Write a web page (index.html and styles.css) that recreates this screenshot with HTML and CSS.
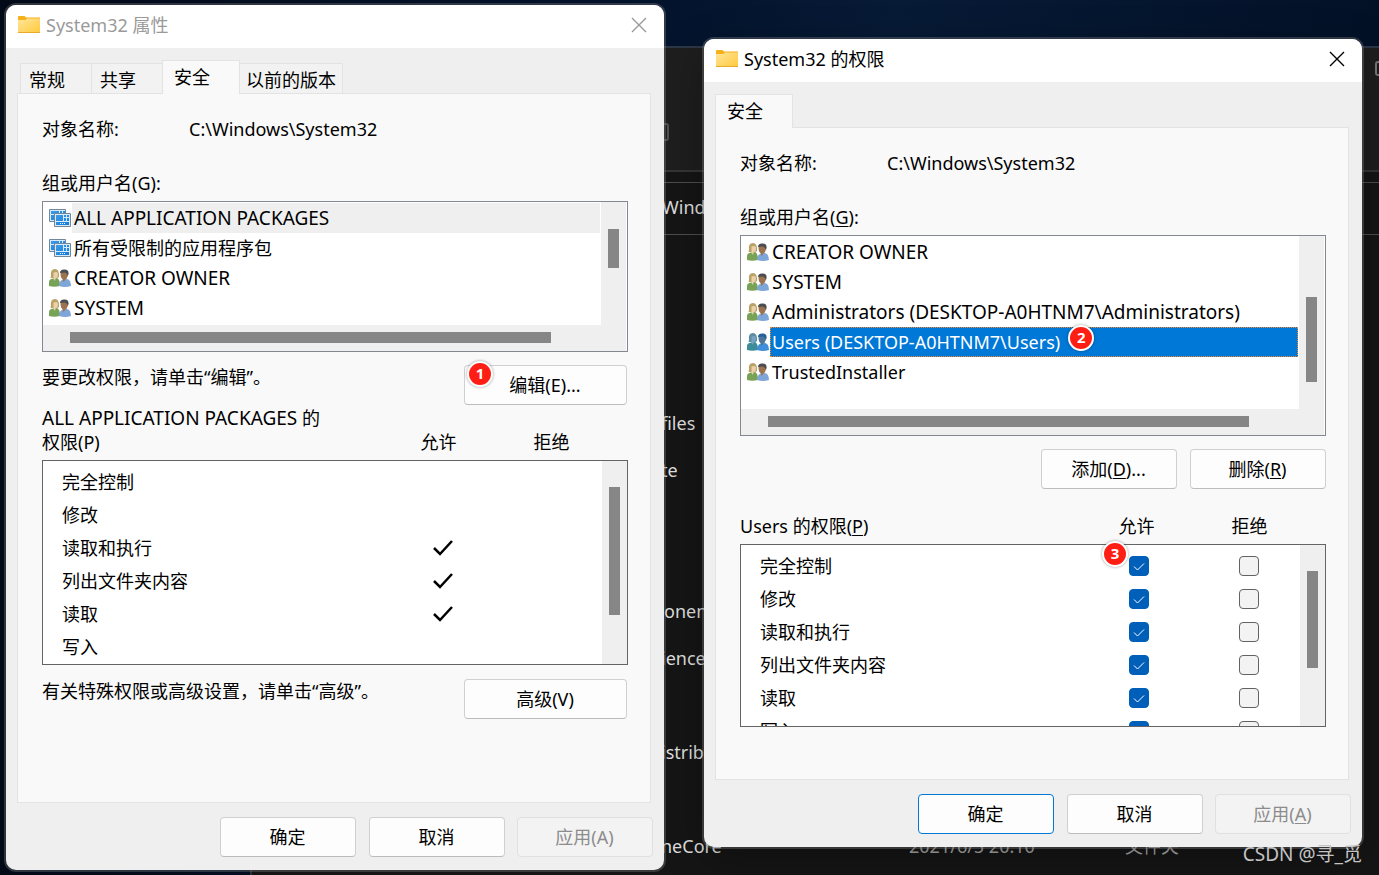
FILE: index.html
```html
<!DOCTYPE html>
<html lang="zh-CN">
<head>
<meta charset="utf-8">
<title>System32 的权限</title>
<link rel="stylesheet" href="styles.css">
</head>
<body>
<svg class="defs" aria-hidden="true">
  <defs>
    <linearGradient id="folder-fill" x1="0" y1="0" x2="1" y2="1">
      <stop offset="0" stop-color="#ffe69a"/><stop offset="1" stop-color="#ffc93c"/>
    </linearGradient>
    <linearGradient id="app-fill" x1="0" y1="0" x2="1" y2="1">
      <stop offset="0" stop-color="#3f9ce6"/><stop offset="1" stop-color="#0f7cdc"/>
    </linearGradient>
  </defs>
  <symbol id="folder" viewBox="0 0 22 18">
    <path d="M0 1Q0 0 1 0H6.500L8 1.500H22V8H0Z" fill="#f5b01c"/>
    <path d="M0 4H7.500L9 2.500H22V17H0Z" fill="url(#folder-fill)"/>
    <path d="M0 16.500H22" stroke="#e9a92b"/>
  </symbol>
  <symbol id="close" viewBox="0 0 16 16">
    <path d="M1 1L15 15M15 1L1 15" fill="none" stroke="currentColor" stroke-width="1.400"/>
  </symbol>
  <symbol id="apps" viewBox="0 0 22 18">
    <path d="M.5.5H16.500V12.500H.5Z" fill="#d8eafa" stroke="#71879b"/>
    <path d="M2 2H10V5H2ZM11 2H13V4H11ZM14 2H16V4H14ZM2 6H6V11H2Z" fill="url(#app-fill)"/>
    <path d="M5.500 4.500H21.500V17.500H5.500Z" fill="#d8eafa" stroke="#71879b"/>
    <path d="M7 6H14V12H7ZM15 6H17V8H15ZM18 6H20V8H18ZM15 9H17V12H15ZM18 9H20V12H18ZM7 13H20V16H7Z" fill="url(#app-fill)"/>
    <path d="M11 14.500H12M13 14.500H14M15 14.500H16" stroke="#fff"/>
  </symbol>
  <symbol id="users" viewBox="0 0 22 18">
    <path class="u-shirt1" d="M0 17V13Q0 10 4 9.500L8 9Q11 10 11 17Q5 18.500 0 17Z"/>
    <path class="u-hair1" d="M2 7Q1 0 6 0Q10.500 0 10 8L8.500 9H2Q1 9 2 7Z"/>
    <path class="u-skin1" d="M4.500 3.500Q9 2 9 5Q9 9 6.500 9.500L6 12L4.500 10Z"/>
    <path class="u-shirt2" d="M10 17Q10 11.500 14 10.500L18 10Q22 11 22 17Q16 19 10 17Z"/>
    <path class="u-skin2" d="M11.500 4Q12 1 16 1Q20 2 19 6Q18 10 16.500 10.500L14.500 13L13.500 10Q11.500 9 11.500 4Z"/>
    <path class="u-hair2" d="M11 4Q11 0 16 .5Q21 1 19 7L18 5L16 3.500Z"/>
  </symbol>
</svg>

<div class="explorer" aria-hidden="true">
  <div class="explorer-bar"><span class="stub"></span><span class="stub stub-top"></span></div>
  <div class="explorer-gap"></div>
  <div class="explorer-address">Windows</div>
  <div class="explorer-list">
    <div class="file">files</div>
    <div class="file">te</div>
    <div class="file"></div>
    <div class="file"></div>
    <div class="file file-inset">onents</div>
    <div class="file">ience</div>
    <div class="file"></div>
    <div class="file">istribu</div>
    <div class="file"></div>
    <div class="file"><span>neCore</span><span class="date">2021/6/5 20:10</span><span class="kind">文件夹</span></div>
  </div>
</div>

<main class="desktop">
  <section class="window window-back" aria-label="System32 属性">
    <header class="titlebar">
      <svg class="folder"><use href="#folder"/></svg>
      <h1 class="title">System32 属性</h1>
      <button class="close" aria-label="关闭"><svg><use href="#close"/></svg></button>
    </header>
    <div class="tabs" role="tablist">
      <button class="tab" role="tab">常规</button>
      <button class="tab" role="tab">共享</button>
      <button class="tab tab-active" role="tab" aria-selected="true">安全</button>
      <button class="tab" role="tab">以前的版本</button>
    </div>
    <div class="panel">
      <div class="object"><span class="object-label">对象名称:</span><span>C:\Windows\System32</span></div>
      <div class="caption" id="groups1">组或用户名(G):</div>
      <div class="list list-short">
        <ul class="rows" role="listbox" aria-labelledby="groups1">
          <li class="row row-hot" role="option"><svg><use href="#apps"/></svg><span class="name caps">ALL APPLICATION PACKAGES</span></li>
          <li class="row" role="option"><svg><use href="#apps"/></svg><span class="name">所有受限制的应用程序包</span></li>
          <li class="row" role="option"><svg><use href="#users"/></svg><span class="name caps">CREATOR OWNER</span></li>
          <li class="row" role="option"><svg><use href="#users"/></svg><span class="name caps">SYSTEM</span></li>
        </ul>
        <div class="vbar"><div class="thumb thumb-a"></div></div>
        <div class="hbar"><div class="thumb"></div></div>
      </div>
      <div class="action">
        <span>要更改权限，请单击“编辑”。</span>
        <div class="anchor"><button class="button button-wide">编辑(E)...</button><span class="badge badge-one">1</span></div>
      </div>
      <div class="perm-head">
        <span><span class="caps">ALL APPLICATION PACKAGES</span> 的<br>权限(P)</span><span class="col">允许</span><span class="col">拒绝</span>
      </div>
      <div class="perms perms-tall">
        <table class="perm-table">
          <tr><th scope="row">完全控制</th><td class="allow"></td><td class="deny"></td></tr>
          <tr><th scope="row">修改</th><td class="allow"></td><td class="deny"></td></tr>
          <tr><th scope="row">读取和执行</th><td class="allow"><svg class="tick" viewBox="0 0 24 16"><path d="M3 8L9 14L21 1"/></svg></td><td class="deny"></td></tr>
          <tr><th scope="row">列出文件夹内容</th><td class="allow"><svg class="tick" viewBox="0 0 24 16"><path d="M3 8L9 14L21 1"/></svg></td><td class="deny"></td></tr>
          <tr><th scope="row">读取</th><td class="allow"><svg class="tick" viewBox="0 0 24 16"><path d="M3 8L9 14L21 1"/></svg></td><td class="deny"></td></tr>
          <tr><th scope="row">写入</th><td class="allow"></td><td class="deny"></td></tr>
        </table>
        <div class="vbar"><div class="thumb thumb-b"></div></div>
      </div>
      <div class="action action-last">
        <span>有关特殊权限或高级设置，请单击“高级”。</span>
        <button class="button button-wide">高级(V)</button>
      </div>
    </div>
    <footer class="footer">
      <button class="button">确定</button>
      <button class="button">取消</button>
      <button class="button" disabled>应用(A)</button>
    </footer>
  </section>

  <section class="window window-front" aria-label="System32 的权限">
    <header class="titlebar">
      <svg class="folder"><use href="#folder"/></svg>
      <h1 class="title">System32 的权限</h1>
      <button class="close" aria-label="关闭"><svg><use href="#close"/></svg></button>
    </header>
    <div class="tabs" role="tablist">
      <button class="tab tab-active" role="tab" aria-selected="true">安全</button>
    </div>
    <div class="panel">
      <div class="object"><span class="object-label">对象名称:</span><span>C:\Windows\System32</span></div>
      <div class="caption" id="groups2">组或用户名(<u>G</u>):</div>
      <div class="list list-long">
        <ul class="rows" role="listbox" aria-labelledby="groups2">
          <li class="row" role="option"><svg><use href="#users"/></svg><span class="name caps">CREATOR OWNER</span></li>
          <li class="row" role="option"><svg><use href="#users"/></svg><span class="name caps">SYSTEM</span></li>
          <li class="row" role="option"><svg><use href="#users"/></svg><span class="name caps">Administrators (DESKTOP-A0HTNM7\Administrators)</span></li>
          <li class="row row-selected" role="option" aria-selected="true"><svg><use href="#users"/></svg><span class="name"><span class="anchor">Users (DESKTOP-A0HTNM7\Users)<span class="badge badge-two">2</span></span></span></li>
          <li class="row" role="option"><svg><use href="#users"/></svg><span class="name">TrustedInstaller</span></li>
        </ul>
        <div class="vbar"><div class="thumb thumb-c"></div></div>
        <div class="hbar"><div class="thumb"></div></div>
      </div>
      <div class="buttons">
        <button class="button">添加(<u>D</u>)...</button>
        <button class="button">删除(<u>R</u>)</button>
      </div>
      <div class="perm-head">
        <span>Users 的权限(<u>P</u>)</span><span class="col">允许</span><span class="col">拒绝</span>
      </div>
      <div class="anchor">
        <div class="perms perms-short">
          <table class="perm-table">
            <tr><th scope="row">完全控制</th><td class="allow"><input type="checkbox" aria-label="允许 完全控制" checked></td><td class="deny"><input type="checkbox" aria-label="拒绝 完全控制"></td></tr>
            <tr><th scope="row">修改</th><td class="allow"><input type="checkbox" aria-label="允许 修改" checked></td><td class="deny"><input type="checkbox" aria-label="拒绝 修改"></td></tr>
            <tr><th scope="row">读取和执行</th><td class="allow"><input type="checkbox" aria-label="允许 读取和执行" checked></td><td class="deny"><input type="checkbox" aria-label="拒绝 读取和执行"></td></tr>
            <tr><th scope="row">列出文件夹内容</th><td class="allow"><input type="checkbox" aria-label="允许 列出文件夹内容" checked></td><td class="deny"><input type="checkbox" aria-label="拒绝 列出文件夹内容"></td></tr>
            <tr><th scope="row">读取</th><td class="allow"><input type="checkbox" aria-label="允许 读取" checked></td><td class="deny"><input type="checkbox" aria-label="拒绝 读取"></td></tr>
            <tr><th scope="row">写入</th><td class="allow"><input type="checkbox" aria-label="允许 写入" checked></td><td class="deny"><input type="checkbox" aria-label="拒绝 写入"></td></tr>
          </table>
          <div class="vbar"><div class="thumb thumb-d"></div></div>
        </div>
        <span class="badge badge-three">3</span>
      </div>
    </div>
    <footer class="footer">
      <button class="button button-default">确定</button>
      <button class="button">取消</button>
      <button class="button" disabled>应用(<u>A</u>)</button>
    </footer>
  </section>
</main>
<div class="watermark">CSDN @寻_觅</div>
</body>
</html>
```

FILE: styles.css
```css
* { box-sizing: border-box; }

body {
  margin: 0;
  position: relative;
  min-height: 100vh;
  overflow: hidden;
  background: linear-gradient(90deg, #020a18, #03122b 45%, #071a36 65%, #031127);
  color: #000;
  font: 18px/24px "Noto Sans", "Noto Sans CJK SC", sans-serif;
}

button, input { font: inherit; color: inherit; }
u { text-underline-offset: 2px; text-decoration-thickness: 1px; }
.defs { position: absolute; width: 0; height: 0; }
.anchor { position: relative; }
.caps { font-size: 19px; }

/* File manager behind the dialogs */
.explorer {
  position: absolute;
  inset: 46px 0 0 250px;
  border-top: 2px solid #2c3746;
  border-left: 2px solid #2c3038;
  background: #151515;
  color: #dedede;
  white-space: nowrap;
}
.explorer-bar { position: relative; height: 124px; background: #1e1e1e; border-bottom: 2px solid #353535; }
.stub { position: absolute; left: 401px; top: 75px; width: 16px; height: 18px; border: 2px solid #505050; border-radius: 3px; }
.stub-top { left: auto; right: -10px; top: 13px; width: 14px; height: 15px; border-color: #777; }
.explorer-gap { height: 10px; }
.explorer-address { height: 53px; padding: 12px 0 0 410px; border: solid #4d4d4d; border-width: 1px 0; }
.explorer-list { padding-top: 165px; }
.file { display: flex; height: 47px; padding: 11px 0 0 409px; }
.file-inset { padding-left: 412px; }
.file span:first-child { flex: 0 0 248px; }
.file .date { flex: 0 0 216px; }
.date, .kind { color: #a5a5a5; }

/* Dialogs */
.desktop {
  position: relative;
  display: flex;
  gap: 40px;
  min-height: 100vh;
  padding: 5px 17px 5px 6px;
}
.window {
  flex: 1 1 0;
  min-width: 0;
  display: flex;
  flex-direction: column;
  border-radius: 10px;
  background: #efefef;
  box-shadow: 0 0 0 2px rgba(128, 128, 128, .36);
}
.window-front {
  margin: 34px 0 23px;
  box-shadow: 0 0 0 2px rgba(128, 128, 128, .36), 0 10px 40px rgba(0, 0, 0, .3);
}
.titlebar {
  display: flex;
  align-items: center;
  height: 43px;
  padding: 0 17px 3px 12px;
  border-radius: 10px 10px 0 0;
  background: #fff;
}
.folder { width: 22px; height: 18px; }
.title { flex: 1; margin: 0 0 0 6px; font-size: 18px; font-weight: 400; }
.window-back .titlebar { color: #9a9a9a; }
.close { display: flex; padding: 0; border: 0; background: none; }
.close svg { width: 16px; height: 16px; }

.tabs { display: flex; align-items: flex-end; padding: 12px 14px 0 11px; }
.window-back .tabs { padding-left: 14px; }
.tab {
  height: 30px;
  padding: 2px 26px 0 8px;
  border: 1px solid #e3e3e3;
  border-width: 1px 0 0 1px;
  background: #f2f2f2;
  text-align: left;
}
.tab:last-child { padding-right: 6px; border-right-width: 1px; }
.tab-active, .tab-active:last-child {
  position: relative;
  height: 34px;
  margin-bottom: -1px;
  padding: 0 29px 1px 11px;
  border-right-width: 1px;
  background: #f9f9f9;
}
.tab-active + .tab { padding-left: 6px; border-left: 0; }

.panel {
  flex: 1;
  margin: 0 13px 0 11px;
  padding: 23px 22px 24px 24px;
  border: 1px solid #e3e3e3;
  background: #f9f9f9;
}
.object { display: flex; margin-bottom: 30px; }
.object-label { width: 147px; }
.caption { margin-bottom: 6px; }

.list {
  display: grid;
  grid-template: 1fr 26px / 1fr 25px;
  padding-right: 1px;
  border: 1px solid #828790;
  background: #fff;
}
.list-short { height: 151px; }
.list-long { height: 201px; }
.rows { margin: 0; padding: 1px 0 0; list-style: none; min-width: 0; }
.row { display: flex; align-items: center; height: 30px; padding: 0 1px 0 6px; white-space: nowrap; }
.row svg { flex: none; width: 22px; height: 18px; margin-right: 1px; }
.name { flex: 1; height: 30px; padding: 3px 0 0 2px; }
.row-hot .name { background: #efefef; }
.row-selected .name { background: #0078d7; color: #fff; outline: 1px dotted #ff8728; outline-offset: -1px; }
.vbar { background: #efefef; padding: 0 7px; }
.hbar { grid-column: 1 / 3; background: #efefef; padding: 7px 75px 8px 27px; }
.thumb { height: 11px; background: #868686; }
.vbar .thumb { width: 11px; }
.vbar .thumb-a { height: 39px; margin-top: 27px; }
.vbar .thumb-b { height: 128px; margin-top: 26px; }
.vbar .thumb-c { height: 85px; margin-top: 61px; }
.vbar .thumb-d { height: 97px; margin-top: 26px; }

.row-selected svg {
  --shirt1: #3c8d9a;
  --hair1: #5c8da0;
  --skin1: #76a4c0;
  --shirt2: #408fda;
  --skin2: #4e7698;
  --hair2: #266299;
}
.u-shirt1 { fill: var(--shirt1, #78a255); }
.u-hair1 { fill: var(--hair1, #b8a268); }
.u-skin1 { fill: var(--skin1, #ecd0a8); }
.u-shirt2 { fill: var(--shirt2, #7fa6d8); }
.u-skin2 { fill: var(--skin2, #9b7351); }
.u-hair2 { fill: var(--hair2, #4b4d50); }

.action { display: flex; justify-content: space-between; margin-top: 13px; padding-right: 1px; }
.action-last { margin-top: 14px; }
.button {
  width: 136px;
  height: 40px;
  padding: 0 1px 0 0;
  border: 1px solid #d0d0d0;
  border-bottom-color: #bcbcbc;
  border-radius: 4px;
  background: #fdfdfd;
}
.button-wide { width: 163px; }
.button-default { border-color: #0078d4; }
.button:disabled { border-color: #e0e0e0; background: #f3f3f3; color: #8c8c8c; }
.buttons { display: flex; justify-content: flex-end; gap: 13px; margin: 13px 0 25px; }

.perm-head {
  display: grid;
  grid-template-columns: 1fr 113px 113px;
  align-items: end;
  margin: 1px 0 6px;
  padding-right: 20px;
}
.col { text-align: center; }
.perms { display: flex; align-items: stretch; overflow: hidden; border: 1px solid #646464; background: #fff; }
.perms-tall { height: 205px; }
.perms-short { height: 183px; }
.perm-table { flex: 1; align-self: flex-start; margin-top: 4px; table-layout: fixed; border-collapse: collapse; }
.perm-table tr { height: 33px; }
.perm-table th { padding: 0 0 0 19px; font-weight: 400; text-align: left; }
.perm-table td { padding: 0; text-align: center; }
.allow { width: 118px; }
.deny { width: 102px; }
.tick { display: block; width: 24px; height: 16px; margin: 0 auto 0 49px; }
.tick path { fill: none; stroke: #000; stroke-width: 2.5; }
input[type="checkbox"] {
  appearance: none;
  display: block;
  width: 20px;
  height: 20px;
  margin: 0 auto;
  border: 1px solid #626262;
  border-radius: 4px;
  background: #f3f3f3;
}
input[type="checkbox"]:checked {
  border-color: #005fb8;
  background: #005fb8 url("data:image/svg+xml,%3Csvg xmlns='http://www.w3.org/2000/svg' viewBox='0 0 18 18'%3E%3Cpath d='M4 9.500L7.500 13L14 6.500' fill='none' stroke='white'/%3E%3C/svg%3E") center / 18px 18px no-repeat;
}

.badge {
  position: absolute;
  width: 26px;
  height: 26px;
  border: 2px solid #fff;
  border-radius: 50%;
  background: #ff1e14;
  box-shadow: 0 0 3px rgba(0, 0, 0, .4);
  color: #fff;
  font: bold 15px/21px "Noto Sans", sans-serif;
  text-align: center;
}
.badge-one { left: 3px; top: -4px; }
.badge-two { left: 100%; top: -5px; margin-left: 8px; }
.badge-three { right: 198px; top: -3px; }

.footer { display: flex; justify-content: flex-end; gap: 12px; padding: 14px 11px 13px; }
.footer .button:first-child { margin-right: 1px; }

.watermark { position: absolute; right: 17px; bottom: 9px; color: #c4c4c4; font-size: 19px; }
```
